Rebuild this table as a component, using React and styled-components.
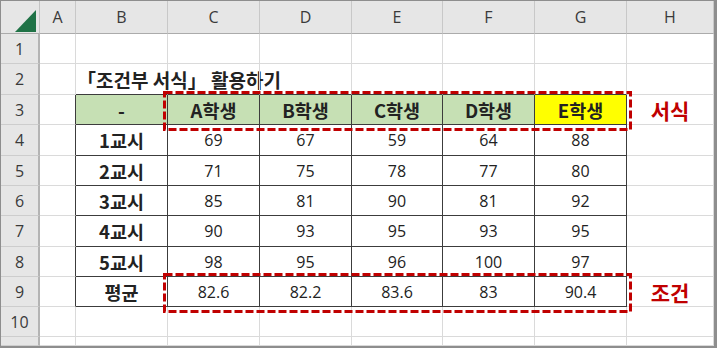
import React from "react";
import styled, { createGlobalStyle } from "styled-components";

const GlobalStyle = createGlobalStyle`
  html, body {
    margin: 0;
    padding: 0;
    background: #ffffff;
  }
  body {
    font-family: "Open Sans", "Noto Sans CJK KR", sans-serif;
  }
`;

const COLS = ["A", "B", "C", "D", "E", "F", "G", "H"];
const STUDENTS = ["A학생", "B학생", "C학생", "D학생", "E학생"];
const SCORES = [
  ["1교시", 69, 67, 59, 64, 88],
  ["2교시", 71, 75, 78, 77, 80],
  ["3교시", 85, 81, 90, 81, 92],
  ["4교시", 90, 93, 95, 93, 95],
  ["5교시", 98, 95, 96, 100, 97],
  ["평균", 82.6, 82.2, 83.6, 83, 90.4],
];

const GRID = "#dadada";
const DARK = "#3c3c3c";
const RED = "#c00000";

const Frame = styled.div`
  position: relative;
  width: 717px;
  height: 348px;
  box-sizing: border-box;
  border-style: solid;
  border-color: #8e8e8e;
  border-width: 1px 3px 2px 1px;
  overflow: hidden;
  background: #fff;
`;

const Sheet = styled.div`
  display: grid;
  grid-template-columns: 39px 36px 92px 92px 92px 91px 92px 92px 1fr;
  grid-template-rows: 33px 30px 31px 30px 31px 30px 30px 31px 30px 30px 30px 1fr;
  height: 100%;
`;

const Corner = styled.div`
  background: #e6e6e6;
  border-right: 1px solid #c4c4c4;
  border-bottom: 1px solid #ababab;
  box-sizing: border-box;
`;

const ColHead = styled.div`
  display: flex;
  align-items: center;
  justify-content: center;
  background: #e6e6e6;
  border-right: 1px solid #c8c8c8;
  border-bottom: 1px solid #ababab;
  box-sizing: border-box;
  color: #3a3a3a;
  font-size: 16px;
`;

const RowHead = styled.div`
  display: flex;
  align-items: center;
  justify-content: center;
  background: #e6e6e6;
  border-right: 2px solid #b4b4b4;
  border-bottom: 1px solid #cdcdcd;
  box-sizing: border-box;
  color: #3a3a3a;
  font-size: 16px;
`;

const Cell = styled.div`
  display: flex;
  align-items: center;
  justify-content: ${(p) => (p.$left ? "flex-start" : "center")};
  padding-left: ${(p) => (p.$left ? "1px" : "0")};
  box-sizing: border-box;
  white-space: nowrap;
  overflow: visible;
  background: ${(p) => p.$bg || "transparent"};
  border-right: 1px solid ${(p) => (p.$rd ? DARK : GRID)};
  border-bottom: 1px solid ${(p) => (p.$bd ? DARK : GRID)};
  color: ${(p) => p.$color || "#222"};
  font-size: ${(p) => p.$size || (p.$bold ? "18.5px" : "16px")};
  font-weight: ${(p) => (p.$bold ? 700 : 400)};
  font-family: ${(p) =>
    p.$bold
      ? `"Noto Sans CJK KR", "Open Sans", sans-serif`
      : `"Open Sans", "Noto Sans CJK KR", sans-serif`};
`;

const Dashed = styled.svg`
  position: absolute;
  left: ${(p) => p.$x}px;
  top: ${(p) => p.$y}px;
  overflow: visible;
  pointer-events: none;
`;

function DashBox({ x, y, w, h }) {
  return (
    <Dashed $x={x} $y={y} width={w} height={h}>
      <rect
        x="1.5"
        y="1.5"
        width={w - 3}
        height={h - 3}
        fill="none"
        stroke={RED}
        strokeWidth="3"
        strokeDasharray="8 3"
      />
    </Dashed>
  );
}

function Row({ n, children }) {
  return (
    <>
      <RowHead>{n}</RowHead>
      {children}
    </>
  );
}

const App = () => {
  const emptyRow = (n) => (
    <Row n={n} key={n}>
      {COLS.map((c) => (
        <Cell key={c} />
      ))}
    </Row>
  );

  const inTable = (ci) => ci >= 1 && ci <= 6;

  return (
    <>
      <GlobalStyle />
      <Frame>
        <Sheet>
          <Corner>
            <svg width="39" height="33">
              <polygon points="14,31 35,31 35,9" fill="#1f7246" />
            </svg>
          </Corner>
          {COLS.map((c) => (
            <ColHead key={c}>{c}</ColHead>
          ))}

          {emptyRow(1)}

          <Row n={2}>
            <Cell />
            <Cell $left $bold $bd $size="19px">
              「조건부 서식」 활용하기
            </Cell>
            {["C", "D", "E", "F", "G"].map((c) => (
              <Cell key={c} $bd />
            ))}
            <Cell />
          </Row>

          <Row n={3}>
            <Cell $rd />
            <Cell $rd $bd $bold $bg="#c6e0b4">
              -
            </Cell>
            {STUDENTS.map((s, i) => (
              <Cell
                key={s}
                $rd
                $bd
                $bold
                $bg={i === 4 ? "#ffff00" : "#c6e0b4"}
              >
                {s}
              </Cell>
            ))}
            <Cell $bold $color={RED} $size="21px">
              서식
            </Cell>
          </Row>

          {SCORES.map((r, ri) => (
            <Row n={ri + 4} key={ri}>
              <Cell $rd />
              {r.map((v, ci) => (
                <Cell key={ci} $rd={inTable(ci + 1)} $bd $bold={ci === 0}>
                  {v}
                </Cell>
              ))}
              {ri === 5 ? (
                <Cell $bold $color={RED} $size="21px">
                  조건
                </Cell>
              ) : (
                <Cell />
              )}
            </Row>
          ))}

          {emptyRow(10)}
          {emptyRow("")}
        </Sheet>

        <DashBox x={162} y={90} w={469} h={40} />
        <DashBox x={162} y={272} w={469} h={40} />
      </Frame>
    </>
  );
};

export default App;
